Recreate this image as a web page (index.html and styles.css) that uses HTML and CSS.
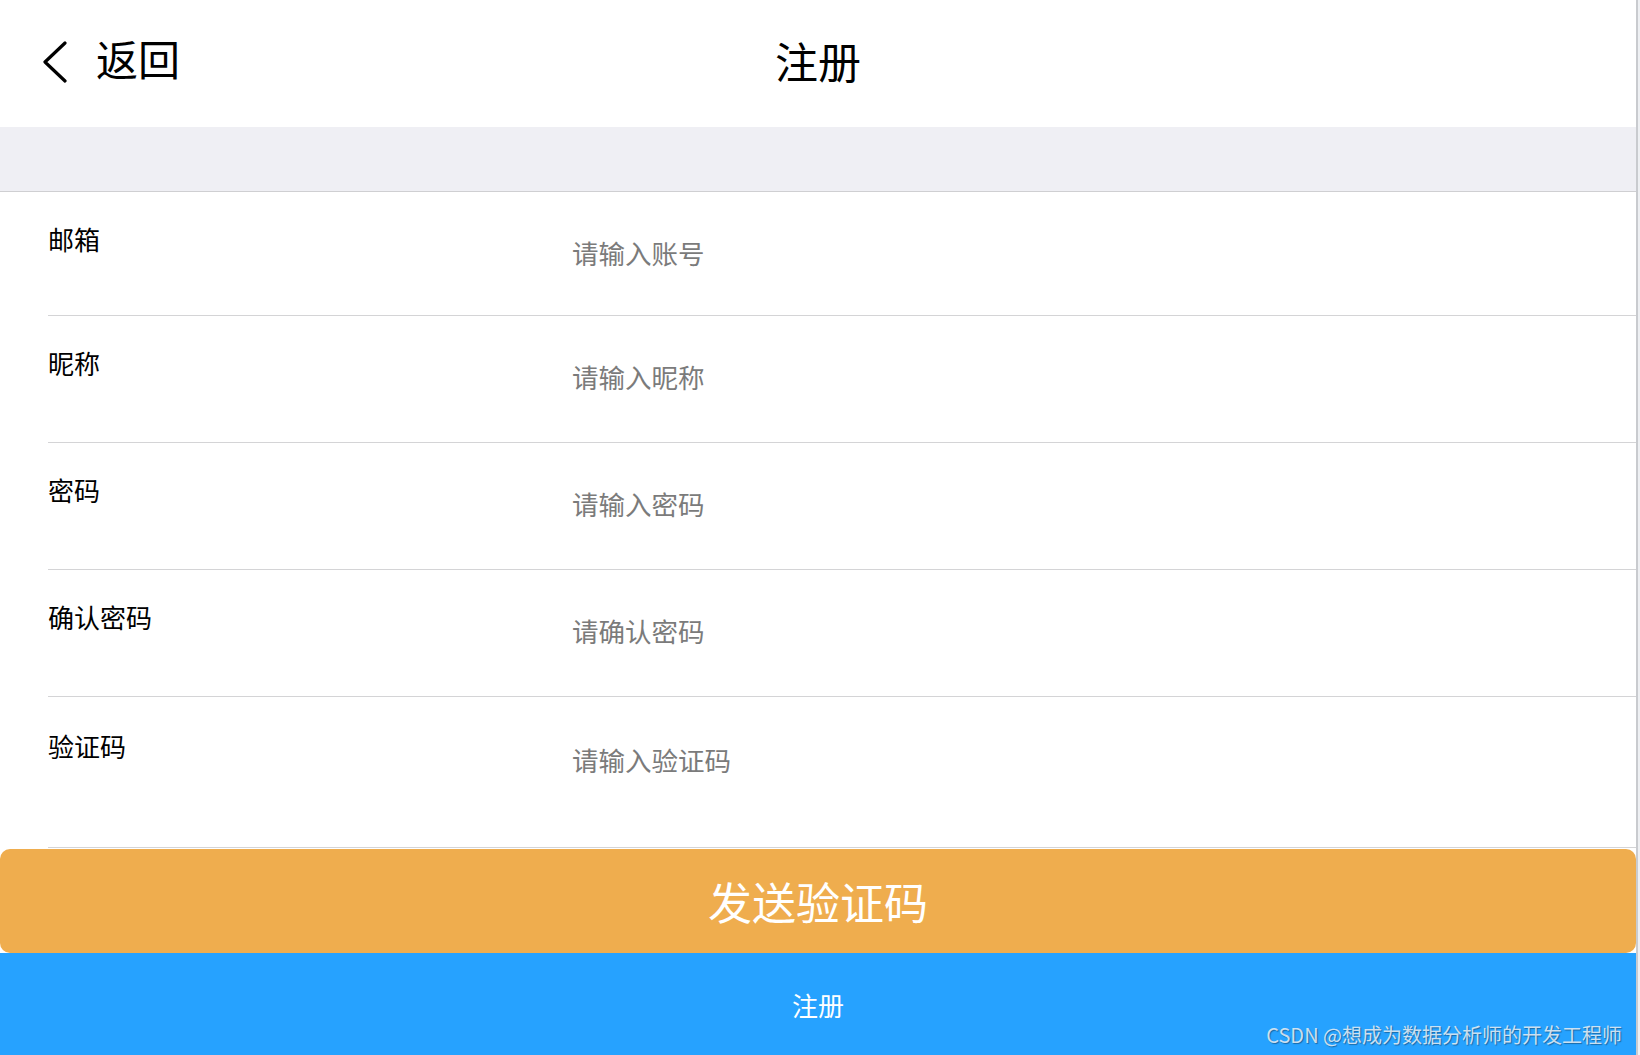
FILE: index.html
```html
<!DOCTYPE html>
<html lang="zh-CN">
<head>
  <meta charset="UTF-8" />
  <meta name="viewport" content="width=device-width, initial-scale=1.0"/>
  <title>注册</title>
  <link rel="stylesheet" href="styles.css">
</head>
<body>

  <div class="page">
    <!-- Nav bar -->
    <header class="navbar">
      <div class="back">
        <svg class="back-icon" width="26" height="42" viewBox="0 0 26 42">
          <path d="M23 2 L3 21 L23 40" fill="none" stroke="#000" stroke-width="3.2" stroke-linecap="round" stroke-linejoin="round"/>
        </svg>
        <span>返回</span>
      </div>
      <h1 class="title">注册</h1>
      <div></div>
    </header>

    <div class="gap-band"></div>

    <!-- Form -->
    <form class="form">
      <div class="field first">
        <label>邮箱</label>
        <input type="text" placeholder="请输入账号">
      </div>
      <div class="field">
        <label>昵称</label>
        <input type="text" placeholder="请输入昵称">
      </div>
      <div class="field">
        <label>密码</label>
        <input type="password" placeholder="请输入密码">
      </div>
      <div class="field">
        <label>确认密码</label>
        <input type="password" placeholder="请确认密码">
      </div>
      <div class="field last">
        <label>验证码</label>
        <input type="text" placeholder="请输入验证码">
      </div>
    </form>

    <button class="send-code" type="button">发送验证码</button>

    <div class="submit-bar">
      <span>注册</span>
      <span class="watermark">CSDN @想成为数据分析师的开发工程师</span>
    </div>
  </div>

  <div class="scroll-edge"></div>

</body>
</html>
```

FILE: styles.css
```css
* {
  padding: 0;
  margin: 0;
  box-sizing: border-box;
}

body {
  height: 100vh;
  display: flex;
  background: white;
  font-family: "Noto Sans CJK SC", "Noto Sans", sans-serif;
  overflow: hidden;
}

.page {
  flex: 1;
  display: flex;
  flex-direction: column;
}

.scroll-edge {
  width: 4px;
  border-left: 2px solid #c9cbcf;
  background: #eef0f3;
}

/* nav */
.navbar {
  height: 127px;
  padding-bottom: 8px;
  display: grid;
  grid-template-columns: 1fr auto 1fr;
  align-items: center;
}

.back {
  display: flex;
  align-items: center;
  padding-left: 42px;
  gap: 28px;
  font-size: 42px;
  color: #000;
}

.back-icon {
  margin-top: 4px;
}

.back span {
  margin-top: -4px;
}

.title {
  font-size: 43px;
  font-weight: normal;
  color: #000;
}

.gap-band {
  height: 65px;
  background: #efeff4;
  border-bottom: 1px solid #cfcfd2;
}

/* form rows */
.field {
  display: flex;
  align-items: flex-start;
  height: 127px;
  margin-left: 48px;
  border-bottom: 1px solid #d4d4d6;
}

.field label {
  width: 524px;
  padding-top: 29px;
  font-size: 26px;
  line-height: 36px;
  color: #000;
}

.field input {
  flex: 1;
  margin-top: 43px;
  border: none;
  outline: none;
  background: transparent;
  font-family: inherit;
  font-size: 26.5px;
  line-height: 36px;
  color: #333;
}

.field input::placeholder {
  color: #7b7b7b;
}

.field.first {
  height: 124px;
}

.field.last {
  height: 151px;
}

.field.last label {
  padding-top: 31px;
}

.field.last input {
  margin-top: 45px;
}

/* buttons */
.send-code {
  height: 104px;
  margin-top: 1px;
  border: none;
  border-radius: 10px;
  background: #efad4e;
  color: white;
  font-family: inherit;
  font-size: 44px;
  cursor: pointer;
}

.submit-bar {
  position: relative;
  flex: 1;
  display: flex;
  align-items: center;
  justify-content: center;
  background: #26a2ff;
  color: white;
  font-size: 26px;
}

.watermark {
  position: absolute;
  right: 14px;
  bottom: 6px;
  font-size: 20px;
  color: rgba(235, 240, 245, 0.85);
  text-shadow: 1px 1px 1px rgba(0, 0, 0, 0.35);
}
```
